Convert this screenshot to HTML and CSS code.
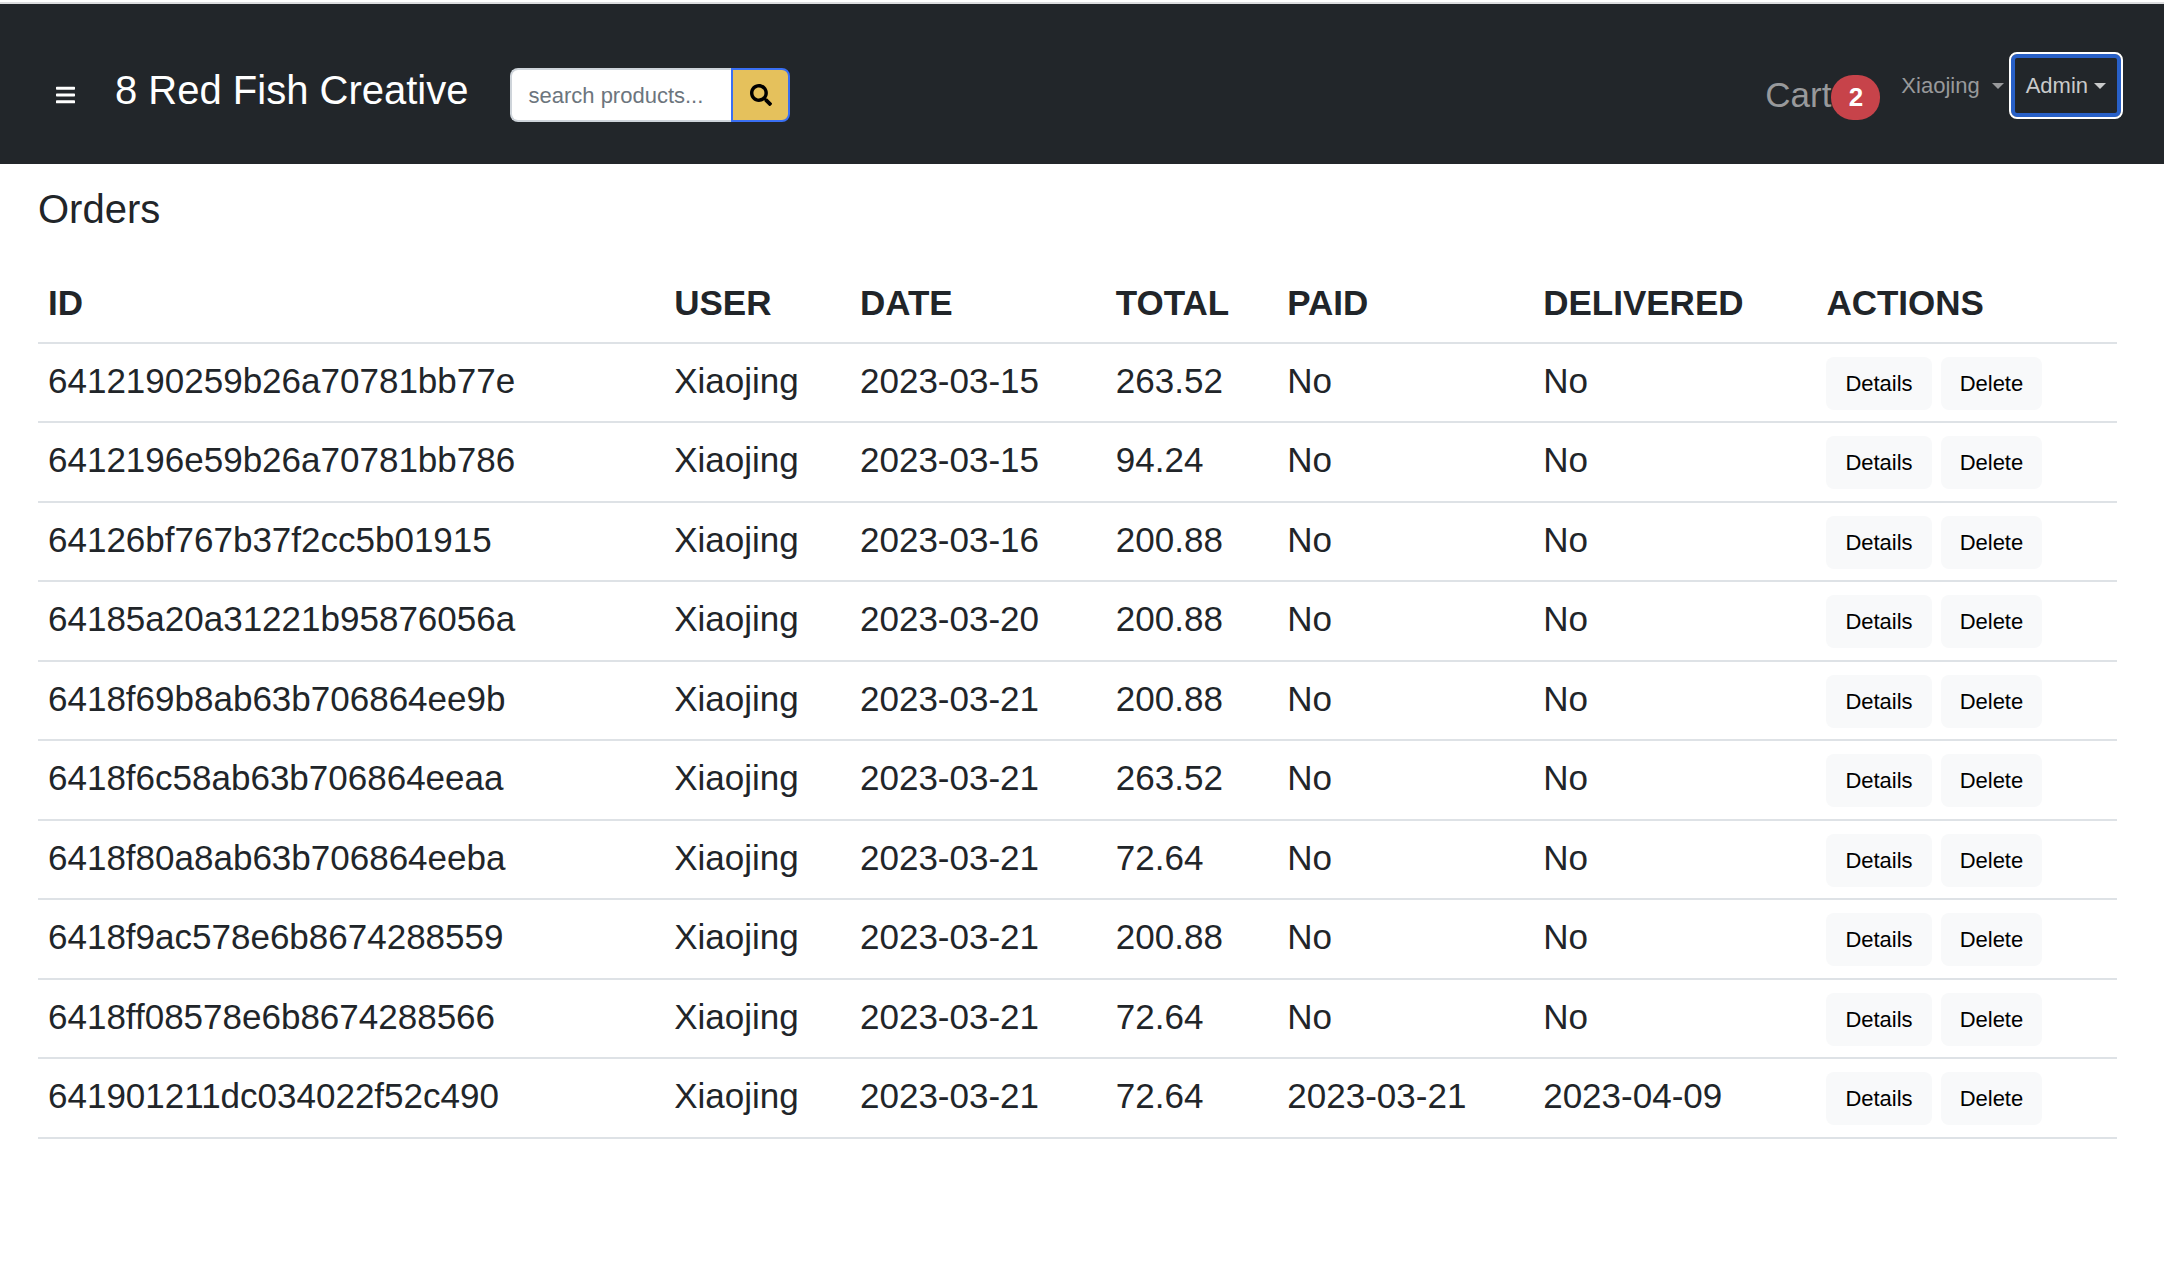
FILE: index.html
```html
<!DOCTYPE html>
<html lang="en">
<head>
<meta charset="utf-8">
<meta name="viewport" content="width=device-width, initial-scale=1">
<title>Orders</title>
<link rel="stylesheet" href="styles.css">
</head>
<body>
<header class="navbar">
  <button class="menu-button" type="button" aria-label="Menu">
    <svg class="menu-icon" viewBox="0 0 448 512" fill="currentColor" aria-hidden="true"><path d="M16 132h416c8.837 0 16-7.163 16-16V76c0-8.837-7.163-16-16-16H16C7.163 60 0 67.163 0 76v40c0 8.837 7.163 16 16 16zm0 160h416c8.837 0 16-7.163 16-16v-40c0-8.837-7.163-16-16-16H16c-8.837 0-16 7.163-16 16v40c0 8.837 7.163 16 16 16zm0 160h416c8.837 0 16-7.163 16-16v-40c0-8.837-7.163-16-16-16H16c-8.837 0-16 7.163-16 16v40c0 8.837 7.163 16 16 16z"/></svg>
  </button>
  <a class="brand" href="#">8 Red Fish Creative</a>
  <form class="search" role="search">
    <input class="search-input" type="text" placeholder="search products..." aria-label="Search products">
    <button class="search-button" type="button" aria-label="Search">
      <svg class="search-icon" viewBox="0 0 512 512" fill="currentColor" aria-hidden="true"><path d="M505 442.7L405.3 343c-4.5-4.5-10.6-7-17-7H372c27.6-35.3 44-79.7 44-128C416 93.1 322.9 0 208 0S0 93.1 0 208s93.1 208 208 208c48.3 0 92.7-16.4 128-44v16.3c0 6.4 2.5 12.5 7 17l99.7 99.7c9.4 9.4 24.6 9.4 33.9 0l28.3-28.3c9.4-9.4 9.4-24.6.1-34zM208 336c-70.7 0-128-57.2-128-128 0-70.7 57.2-128 128-128 70.7 0 128 57.2 128 128 0 70.7-57.2 128-128 128z"/></svg>
    </button>
  </form>
  <nav class="nav-links">
    <a class="cart" href="#">Cart<span class="badge">2</span></a>
    <div class="account">
      <button class="dropdown user-menu" type="button">Xiaojing<span class="caret"></span></button>
      <button class="dropdown admin-menu" type="button">Admin<span class="caret"></span></button>
    </div>
  </nav>
</header>
<main class="content">
  <h1 class="page-title">Orders</h1>
  <table class="orders">
    <thead>
      <tr><th>ID</th><th>USER</th><th>DATE</th><th>TOTAL</th><th>PAID</th><th>DELIVERED</th><th>ACTIONS</th></tr>
    </thead>
    <tbody>
      <tr><td>6412190259b26a70781bb77e</td><td>Xiaojing</td><td>2023-03-15</td><td>263.52</td><td>No</td><td>No</td><td class="actions"><div class="action-list"><button class="btn" type="button">Details</button><button class="btn" type="button">Delete</button></div></td></tr>
      <tr><td>6412196e59b26a70781bb786</td><td>Xiaojing</td><td>2023-03-15</td><td>94.24</td><td>No</td><td>No</td><td class="actions"><div class="action-list"><button class="btn" type="button">Details</button><button class="btn" type="button">Delete</button></div></td></tr>
      <tr><td>64126bf767b37f2cc5b01915</td><td>Xiaojing</td><td>2023-03-16</td><td>200.88</td><td>No</td><td>No</td><td class="actions"><div class="action-list"><button class="btn" type="button">Details</button><button class="btn" type="button">Delete</button></div></td></tr>
      <tr><td>64185a20a31221b95876056a</td><td>Xiaojing</td><td>2023-03-20</td><td>200.88</td><td>No</td><td>No</td><td class="actions"><div class="action-list"><button class="btn" type="button">Details</button><button class="btn" type="button">Delete</button></div></td></tr>
      <tr><td>6418f69b8ab63b706864ee9b</td><td>Xiaojing</td><td>2023-03-21</td><td>200.88</td><td>No</td><td>No</td><td class="actions"><div class="action-list"><button class="btn" type="button">Details</button><button class="btn" type="button">Delete</button></div></td></tr>
      <tr><td>6418f6c58ab63b706864eeaa</td><td>Xiaojing</td><td>2023-03-21</td><td>263.52</td><td>No</td><td>No</td><td class="actions"><div class="action-list"><button class="btn" type="button">Details</button><button class="btn" type="button">Delete</button></div></td></tr>
      <tr><td>6418f80a8ab63b706864eeba</td><td>Xiaojing</td><td>2023-03-21</td><td>72.64</td><td>No</td><td>No</td><td class="actions"><div class="action-list"><button class="btn" type="button">Details</button><button class="btn" type="button">Delete</button></div></td></tr>
      <tr><td>6418f9ac578e6b8674288559</td><td>Xiaojing</td><td>2023-03-21</td><td>200.88</td><td>No</td><td>No</td><td class="actions"><div class="action-list"><button class="btn" type="button">Details</button><button class="btn" type="button">Delete</button></div></td></tr>
      <tr><td>6418ff08578e6b8674288566</td><td>Xiaojing</td><td>2023-03-21</td><td>72.64</td><td>No</td><td>No</td><td class="actions"><div class="action-list"><button class="btn" type="button">Details</button><button class="btn" type="button">Delete</button></div></td></tr>
      <tr><td>641901211dc034022f52c490</td><td>Xiaojing</td><td>2023-03-21</td><td>72.64</td><td>2023-03-21</td><td>2023-04-09</td><td class="actions"><div class="action-list"><button class="btn" type="button">Details</button><button class="btn" type="button">Delete</button></div></td></tr>
    </tbody>
  </table>
</main>
</body>
</html>
```

FILE: styles.css
```css
* {
  box-sizing: border-box;
}

body {
  margin: 0;
  padding-top: 2px;
  background: #fff;
  color: #212529;
  font-family: "Liberation Sans", Arial, sans-serif;
  font-size: 22px;
  line-height: 1.5;
}

button,
input {
  margin: 0;
  font: inherit;
}

button {
  cursor: pointer;
}

a {
  text-decoration: none;
}

/* Top bar */
.navbar {
  display: flex;
  align-items: center;
  min-height: 162px;
  padding: 22px 41px 0 38px;
  border-top: 2px solid #dcdddf;
  background: #22262a;
}

.menu-button {
  display: flex;
  padding: 16px 18px;
  border: 0;
  background: none;
  color: #fff;
}

.menu-icon {
  width: 19px;
  height: 22px;
}

.brand {
  margin: 0 42px 11px 22px;
  color: #fff;
  font-size: 40px;
  white-space: nowrap;
}

.search {
  display: flex;
}

.search-input {
  width: 221px;
  height: 54px;
  padding: 2px 16px 0;
  border: 2px solid #ced4da;
  border-right: 0;
  border-radius: 8px 0 0 8px;
  background: #fff;
  color: #212529;
}

.search-input::placeholder {
  color: #6c757d;
  opacity: 1;
}

.search-button {
  display: flex;
  align-items: center;
  justify-content: center;
  width: 59px;
  height: 54px;
  padding: 0;
  border: 2px solid #3a6ff2;
  border-radius: 0 8px 8px 0;
  background: #e5c15c;
  color: #000;
}

.search-icon {
  width: 22px;
  height: 22px;
}

.nav-links {
  display: flex;
  align-items: center;
  margin-left: auto;
}

.cart {
  display: flex;
  align-items: center;
  color: #98999b;
  font-size: 35px;
}

.badge {
  min-width: 49px;
  margin-top: 5px;
  padding: 3px 16px;
  border-radius: 22px;
  background: #c7434a;
  color: #fff;
  font-size: 26px;
  font-weight: 700;
  text-align: center;
}

.account {
  display: flex;
  align-items: center;
  margin: 0 0 19px 21px;
}

.dropdown {
  display: flex;
  align-items: center;
  height: 67px;
  background: none;
}

.user-menu {
  gap: 12px;
  padding: 0 5px 0 0;
  border: 0;
  color: #98999b;
}

.admin-menu {
  gap: 6px;
  padding: 0 15px;
  border: 2px solid #fff;
  border-radius: 8px;
  box-shadow: inset 0 0 0 4px #2860c8;
  color: #c9cacb;
}

.caret {
  border: 6px solid transparent;
  border-top-color: currentColor;
  border-bottom: 0;
}

/* Orders page */
.content {
  padding: 21px 47px 48px 38px;
}

.page-title {
  margin: 0 0 33px;
  font-size: 40px;
  font-weight: 400;
  line-height: 48px;
}

.orders {
  width: 100%;
  border-spacing: 0;
  font-size: 35px;
}

.orders th,
.orders td {
  padding: 11px 10px 14px;
  border-bottom: 2px solid #dee2e6;
  text-align: left;
  vertical-align: top;
  white-space: nowrap;
}

.orders th {
  padding-bottom: 12px;
}

.orders .actions {
  padding: 13px 8px 11px 10px;
}

.action-list {
  display: flex;
  gap: 9px;
}

.btn {
  height: 53px;
  padding: 0 19px;
  border: 0;
  border-radius: 8px;
  background: #f8f9fa;
  color: #000;
  font-size: 22px;
}
```
